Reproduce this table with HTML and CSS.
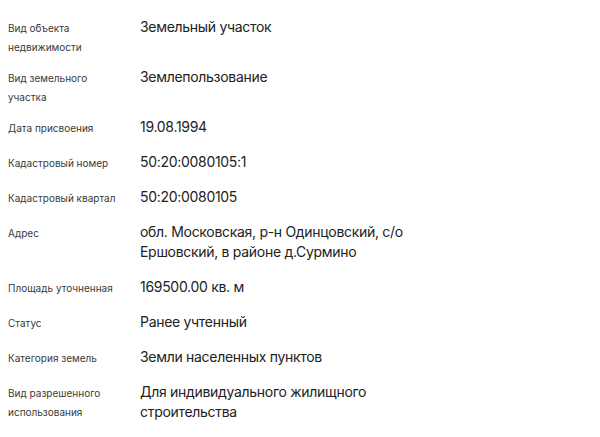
FILE: index.html
```html
<!DOCTYPE html>
<html lang="ru">
<head>
<meta charset="utf-8">
<link rel="stylesheet" href="styles.css">
</head>
<body>
<dl class="props">
  <dt class="label">Вид объекта<br>недвижимости</dt>
  <dd class="value">Земельный участок</dd>
  <dt class="label">Вид земельного<br>участка</dt>
  <dd class="value">Землепользование</dd>
  <dt class="label">Дата присвоения</dt>
  <dd class="value">19.08.1994</dd>
  <dt class="label">Кадастровый номер</dt>
  <dd class="value">50:20:0080105:1</dd>
  <dt class="label">Кадастровый квартал</dt>
  <dd class="value">50:20:0080105</dd>
  <dt class="label">Адрес</dt>
  <dd class="value">обл. Московская, р-н Одинцовский, с/о Ершовский, в районе д.Сурмино</dd>
  <dt class="label">Площадь уточненная</dt>
  <dd class="value">169500.00 кв. м</dd>
  <dt class="label">Статус</dt>
  <dd class="value">Ранее учтенный</dd>
  <dt class="label">Категория земель</dt>
  <dd class="value">Земли населенных пунктов</dd>
  <dt class="label">Вид разрешенного<br>использования</dt>
  <dd class="value">Для индивидуального жилищного строительства</dd>
</dl>
</body>
</html>
```

FILE: styles.css
```css
html, body {
  margin: 0;
  padding: 0;
  background: #ffffff;
}
body {
  padding: 17px 8px 0 8px;
  font-family: Inter, "Noto Sans", sans-serif;
}
.props {
  margin: 0;
  display: grid;
  grid-template-columns: 132px 300px;
  row-gap: 15px;
  align-items: start;
}
.label {
  margin: 0 0 -5px 0;
  font-size: 10px;
  line-height: 19px;
  padding-top: 2px;
  color: #3a3a3a;
}
.value {
  margin: 0;
  font-size: 14px;
  line-height: 20px;
  letter-spacing: -0.3px;
  color: #222222;
}
```
